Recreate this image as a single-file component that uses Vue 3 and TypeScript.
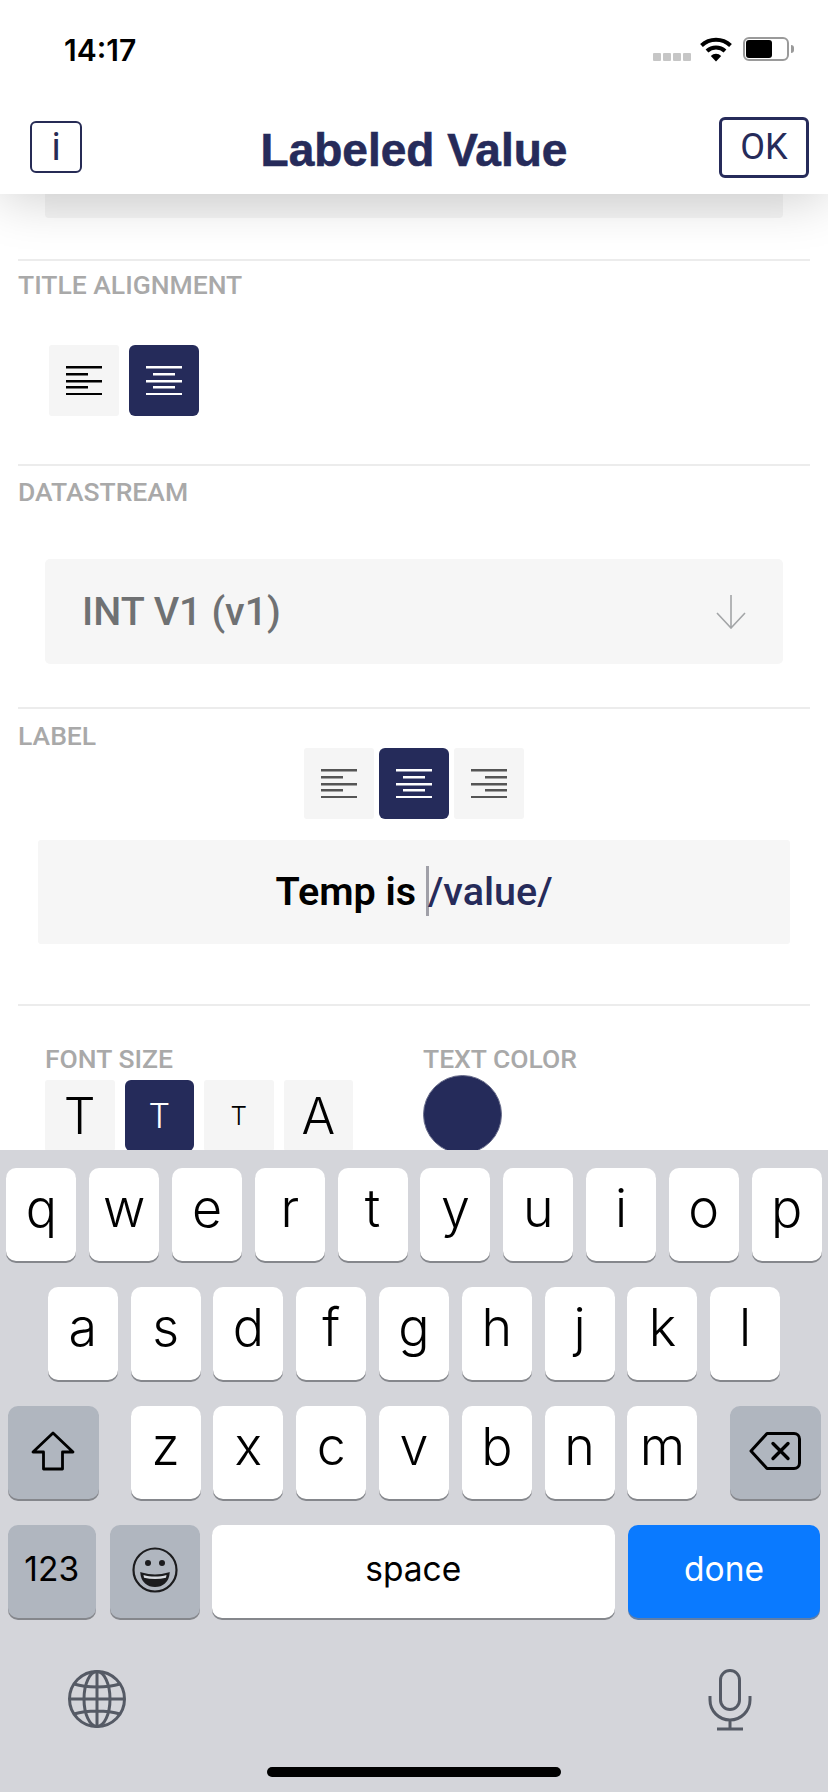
<script setup lang="ts">
type Align = 'left' | 'center' | 'right'

const rowOne = ['q', 'w', 'e', 'r', 't', 'y', 'u', 'i', 'o', 'p']
const rowTwo = ['a', 's', 'd', 'f', 'g', 'h', 'j', 'k', 'l']
const rowThree = ['z', 'x', 'c', 'v', 'b', 'n', 'm']

const lineYs = [0, 7, 14, 20, 27]

// five lines, every second one short
function lineX(i: number, align: Align) {
  if (i % 2 === 0) return 0
  if (align === 'left') return 0
  if (align === 'center') return 7
  return 14
}
function lineW(i: number) {
  return i % 2 === 0 ? 36 : 22
}

const sizes = [
  { text: 'T', cls: 'fs-xl' },
  { text: 'T', cls: 'fs-md active' },
  { text: 'T', cls: 'fs-sm' },
  { text: 'A', cls: 'fs-xl' },
]
</script>

<template>
  <div class="screen">
    <div class="top">
      <div class="status">
        <span class="time">14:17</span>
        <div class="status-icons">
          <div class="dots"><i></i><i></i><i></i><i></i></div>
          <svg class="wifi" width="32" height="25" viewBox="0 0 32 25">
            <path d="M1.5 8.5a21 21 0 0 1 29 0" fill="none" stroke="#000" stroke-width="4" />
            <path d="M7 14a13 13 0 0 1 18 0" fill="none" stroke="#000" stroke-width="4" />
            <path d="M16 24.5l-5.2-5.6a7.4 7.4 0 0 1 10.4 0z" fill="#000" />
          </svg>
          <div class="battery"><div class="battery-fill"></div></div>
          <div class="nib"></div>
        </div>
      </div>
      <header class="bar">
        <button class="btn-i">i</button>
        <h1 class="title">Labeled Value</h1>
        <button class="btn-ok">OK</button>
      </header>
    </div>

    <main class="content">
      <div class="clipped-card"></div>

      <section class="sec sec-title">
        <div class="label">TITLE ALIGNMENT</div>
        <div class="aligns">
          <div v-for="a in (['left', 'center'] as Align[])" :key="a" class="tile" :class="{ active: a === 'center' }">
            <svg width="36" height="29" viewBox="0 0 36 29">
              <rect v-for="(y, i) in lineYs" :key="i" :x="lineX(i, a)" :y="y" :width="lineW(i)" height="2.5" fill="currentColor" />
            </svg>
          </div>
        </div>
      </section>

      <section class="sec sec-stream">
        <div class="label">DATASTREAM</div>
        <div class="select">
          <span>INT V1 (v1)</span>
          <svg width="30" height="34" viewBox="0 0 30 34" fill="none" stroke="#a3a5a7" stroke-width="1.6">
            <path d="M15 0v33M1 18l14 15 14-15" />
          </svg>
        </div>
      </section>

      <section class="sec sec-label">
        <div class="label">LABEL</div>
        <div class="aligns label-aligns">
          <div v-for="a in (['left', 'center', 'right'] as Align[])" :key="a" class="tile" :class="{ active: a === 'center' }">
            <svg width="36" height="29" viewBox="0 0 36 29">
              <rect v-for="(y, i) in lineYs" :key="i" :x="lineX(i, a)" :y="y" :width="lineW(i)" height="2.5" fill="currentColor" />
            </svg>
          </div>
        </div>
        <div class="input">
          <span class="typed">Temp is </span><span class="caret"></span><span class="token">/value/</span>
        </div>
      </section>

      <section class="sec sec-font">
        <div class="col-size">
          <div class="label plain">FONT SIZE</div>
          <div class="sizes">
            <div v-for="(s, i) in sizes" :key="i" class="tile size" :class="s.cls">{{ s.text }}</div>
          </div>
        </div>
        <div class="col-color">
          <div class="label plain">TEXT COLOR</div>
          <div class="swatch"></div>
        </div>
      </section>
    </main>

    <footer class="keyboard">
      <div class="row">
        <div v-for="k in rowOne" :key="k" class="key">{{ k }}</div>
      </div>
      <div class="row">
        <div v-for="k in rowTwo" :key="k" class="key">{{ k }}</div>
      </div>
      <div class="row row-3">
        <div class="key dark wide">
          <svg width="44" height="40" viewBox="0 0 44 40" fill="none" stroke="#000" stroke-width="2.8" stroke-linejoin="round">
            <path d="M22 2L2 21h10.5v17h19V21H42z" />
          </svg>
        </div>
        <div class="letters">
          <div v-for="k in rowThree" :key="k" class="key">{{ k }}</div>
        </div>
        <div class="key dark wide">
          <svg width="52" height="38" viewBox="0 0 52 38" fill="none" stroke="#000" stroke-width="3" stroke-linejoin="round">
            <path d="M18 1.500h27a5.500 5.500 0 0 1 5.500 5.500v24a5.500 5.500 0 0 1-5.500 5.500H18L2 19z" />
            <path d="M24 11.500l15 15M39 11.500l-15 15" stroke-linecap="round" stroke-width="3.400" />
          </svg>
        </div>
      </div>
      <div class="row row-4">
        <div class="key dark k123 small">123</div>
        <div class="key dark kemoji">
          <svg width="46" height="46" viewBox="0 0 46 46" fill="none" stroke="#1c1c1e" stroke-width="2.200">
            <circle cx="23" cy="23" r="21.500" />
            <circle cx="16" cy="16" r="3" fill="#1c1c1e" stroke="none" />
            <circle cx="30" cy="16" r="3" fill="#1c1c1e" stroke="none" />
            <path d="M9.500 26.500c8 2.500 19 2.500 27 0-.5 8-6.500 12.500-13.500 12.500s-13-4.500-13.500-12.500z" fill="#1c1c1e" />
            <path d="M11.500 28c7 2 16 2 23 0l-.5 2.800c-7 1.700-15 1.700-22 0z" fill="#d8dbe0" stroke="none" />
          </svg>
        </div>
        <div class="key kspace small">space</div>
        <div class="key kdone small">done</div>
      </div>
      <div class="extras">
        <svg width="60" height="60" viewBox="0 0 60 60" fill="none" stroke="#555a65" stroke-width="3">
          <circle cx="30" cy="30" r="27.500" />
          <ellipse cx="30" cy="30" rx="13" ry="27.500" />
          <path d="M30 2.500v55M2.500 30h55M7 15c13 4 33 4 46 0M7 45c13-4 33-4 46 0" />
        </svg>
        <svg width="44" height="62" viewBox="0 0 44 62" fill="none" stroke="#555a65" stroke-width="3">
          <rect x="12.500" y="1.500" width="19" height="39" rx="9.500" />
          <path d="M2 27v4a20 20 0 0 0 40 0v-4M22 51v9M9 60h26" />
        </svg>
      </div>
      <div class="home"></div>
    </footer>
  </div>
</template>

<style scoped>
.screen {
  width: 828px;
  height: 1792px;
  display: flex;
  flex-direction: column;
  overflow: hidden;
  background: #fff;
  font-family: Roboto, 'Liberation Sans', sans-serif;
}

.top {
  position: relative;
  z-index: 2;
  height: 194px;
  background: #fff;
  box-shadow: 0 4px 50px rgba(0, 0, 0, 0.2);
}

.status {
  height: 100px;
  display: flex;
  justify-content: space-between;
  padding: 33px 34px 0 64px;
  box-sizing: border-box;
}
.time {
  font-family: Inter, sans-serif;
  font-weight: 600;
  font-size: 30px;
  line-height: 34px;
  color: #000;
}
.status-icons {
  display: flex;
  align-items: flex-start;
  padding-top: 4px;
}
.dots {
  display: flex;
  gap: 2px;
  margin-top: 16px;
  margin-right: 9px;
}
.dots i {
  width: 8px;
  height: 8px;
  border-radius: 1px;
  background: #c6c6c6;
}
.wifi {
  margin-right: 11px;
}
.battery {
  width: 46px;
  height: 24px;
  box-sizing: border-box;
  border: 2px solid #9a9a9a;
  border-radius: 6px;
  padding: 1px;
}
.battery-fill {
  width: 26px;
  height: 18px;
  background: #000;
  border-radius: 3px;
}
.nib {
  width: 3px;
  height: 8px;
  margin: 8px 0 0 2px;
  background: #9a9a9a;
  border-radius: 0 3px 3px 0;
}

.bar {
  height: 94px;
  display: flex;
  align-items: center;
  justify-content: space-between;
  padding: 0 19px 0 30px;
  position: relative;
}
.btn-i {
  width: 52px;
  height: 52px;
  box-sizing: border-box;
  border: 2.500px solid #262b55;
  border-radius: 6px;
  background: #fff;
  color: #262b55;
  font: 400 38px Roboto, sans-serif;
  padding: 0;
}
.btn-ok {
  width: 90px;
  height: 61px;
  box-sizing: border-box;
  border: 3px solid #262b5a;
  border-radius: 6px;
  background: #fff;
  color: #262b5a;
  font: 400 36px Roboto, sans-serif;
  padding: 0;
}
.title {
  position: absolute;
  left: 0;
  right: 0;
  top: 25px;
  margin: 0;
  text-align: center;
  font-family: 'Liberation Sans', sans-serif;
  font-weight: 700;
  font-size: 46px;
  line-height: 50px;
  -webkit-text-stroke: 0.6px #262b5a;
  color: #262b5a;
}

.content {
  height: 956px;
  overflow: hidden;
  flex: none;
}
.clipped-card {
  height: 24px;
  margin: 0 45px 41px;
  background: #f5f5f5;
  border-radius: 0 0 4px 4px;
}

.sec {
  margin: 0 18px;
  border-top: 2px solid #ececec;
  box-sizing: border-box;
}
.label {
  font-weight: 500;
  font-size: 26.5px;
  line-height: 24px;
  color: #a9a9a9;
}
.sec-title {
  height: 205px;
  padding-top: 12px;
}
.aligns {
  display: flex;
  gap: 10px;
  margin: 48px 0 0 31px;
}
.tile {
  width: 70px;
  height: 71px;
  display: flex;
  align-items: center;
  justify-content: center;
  background: #f5f5f5;
  color: #000;
  border-radius: 3px;
}
.tile.active {
  background: #252b5a;
  color: #fff;
  border-radius: 6px;
}

.sec-stream {
  height: 243px;
  padding-top: 14px;
}
.select {
  height: 105px;
  margin: 55px 27px 0;
  padding: 0 37px 0 37px;
  display: flex;
  align-items: center;
  justify-content: space-between;
  background: #f6f6f6;
  border-radius: 5px;
  color: #6f7173;
  font-weight: 500;
  font-size: 39.5px;
}

.sec-label {
  height: 297px;
  padding-top: 15px;
}
.label-aligns {
  justify-content: center;
  gap: 5px;
  margin: 0;
}
.label-aligns .tile {
  color: #555;
}
.label-aligns .tile.active {
  color: #fff;
}
.input {
  height: 104px;
  margin: 21px 20px 0 20px;
  padding-bottom: 2px;
  box-sizing: border-box;
  display: flex;
  align-items: center;
  justify-content: center;
  background: #f6f6f6;
  border-radius: 3px;
  font-size: 39.5px;
  font-weight: 600;
  white-space: pre;
}
.typed {
  color: #000;
}
.token {
  color: #262b5a;
  font-weight: 500;
}
.caret {
  width: 3px;
  height: 50px;
  margin-right: -1px;
  background: #a0a0a8;
}

.sec-font {
  display: flex;
  padding-top: 41px;
  height: 300px;
}
.col-size {
  width: 405px;
  padding-left: 27px;
  box-sizing: border-box;
}
.plain {
  margin-bottom: 9px;
}
.sizes {
  display: flex;
  gap: 10px;
}
.tile.size {
  width: 69.500px;
  font-family: Inter, sans-serif;
  font-weight: 300;
  line-height: 1;
}
.fs-xl {
  font-size: 50px;
}
.fs-md {
  font-size: 34px;
}
.fs-sm {
  font-size: 26px;
}
.swatch {
  width: 79px;
  height: 79px;
  margin-top: -5px;
  box-sizing: border-box;
  border-radius: 50%;
  background: #252b5a;
  border: 1px solid #6a6e8c;
}

.keyboard {
  flex: 1;
  background: #d4d5da;
  padding-top: 18px;
  display: flex;
  flex-direction: column;
  font-family: Inter, 'Liberation Sans', sans-serif;
  font-weight: 300;
  position: relative;
}
.row {
  display: flex;
  justify-content: center;
  gap: 12.8px;
  height: 93px;
  margin-bottom: 26px;
}
.row-3 {
  justify-content: space-between;
  padding: 0 7.500px;
}
.row-4 {
  justify-content: flex-start;
  padding: 0 7.500px;
  gap: 0;
}
.letters {
  display: flex;
  gap: 12.8px;
}
.key {
  width: 70px;
  height: 93px;
  display: flex;
  align-items: center;
  justify-content: center;
  padding-bottom: 12px;
  box-sizing: border-box;
  background: #fff;
  border-radius: 10px;
  box-shadow: 0 2px 0 #85878c;
  font-size: 52px;
  color: #000;
}
.key.dark {
  background: #b0b6bf;
}
.key.wide {
  width: 91px;
  padding-bottom: 4px;
}
.key.small {
  font-size: 33.500px;
  font-weight: 400;
  padding-bottom: 6px;
}
.k123 {
  width: 88.5px;
  margin-right: 14px;
}
.kemoji {
  width: 90px;
  margin-right: 12px;
  padding-bottom: 4px;
}
.kspace {
  width: 403px;
  margin-right: 13px;
}
.kdone {
  width: 193px;
  background: #0a7aff;
  box-shadow: 0 2px 0 #5f7ea8;
}
.key.kdone {
  color: #fff;
}

.extras {
  display: flex;
  justify-content: space-between;
  align-items: flex-start;
  padding: 25px 76px 0 67px;
  margin-top: 0;
}
.home {
  position: absolute;
  left: 267px;
  bottom: 15px;
  width: 294px;
  height: 10px;
  border-radius: 5px;
  background: #000;
}
</style>

<style>
html,
body {
  margin: 0;
  background: #fff;
}
</style>
